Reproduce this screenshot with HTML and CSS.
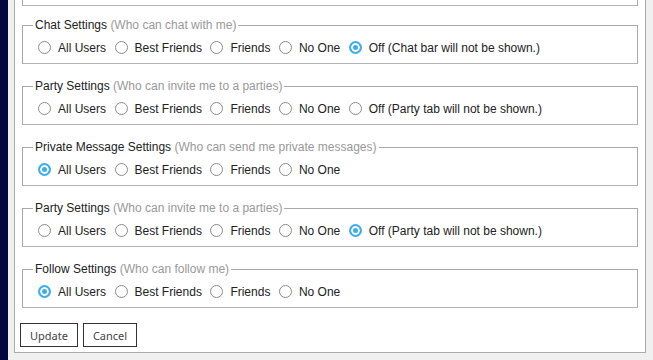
FILE: index.html
```html
<!DOCTYPE html>
<html lang="en">

<head>
    <meta charset="UTF-8">
    <meta name="viewport" content="width=device-width, initial-scale=1.0">
    <title>Privacy Settings</title>

    <link rel="stylesheet" href="styles.css">

</head>

<body>

    <div class="side-bar"></div>

    <div class="main">
        <form class="panel">

            <fieldset class="group">
                <legend>Profile Settings <span class="hint">(Who can see my profile)</span></legend>
                <div class="options">
                    <label class="option"><input type="radio" name="profile" checked><span>All Users</span></label>
                    <label class="option"><input type="radio" name="profile"><span>Best Friends</span></label>
                    <label class="option"><input type="radio" name="profile"><span>Friends</span></label>
                    <label class="option"><input type="radio" name="profile"><span>No One</span></label>
                </div>
            </fieldset>

            <fieldset class="group">
                <legend>Chat Settings <span class="hint">(Who can chat with me)</span></legend>
                <div class="options">
                    <label class="option"><input type="radio" name="chat"><span>All Users</span></label>
                    <label class="option"><input type="radio" name="chat"><span>Best Friends</span></label>
                    <label class="option"><input type="radio" name="chat"><span>Friends</span></label>
                    <label class="option"><input type="radio" name="chat"><span>No One</span></label>
                    <label class="option"><input type="radio" name="chat" checked><span>Off (Chat bar will not be shown.)</span></label>
                </div>
            </fieldset>

            <fieldset class="group">
                <legend>Party Settings <span class="hint">(Who can invite me to a parties)</span></legend>
                <div class="options">
                    <label class="option"><input type="radio" name="party1"><span>All Users</span></label>
                    <label class="option"><input type="radio" name="party1"><span>Best Friends</span></label>
                    <label class="option"><input type="radio" name="party1"><span>Friends</span></label>
                    <label class="option"><input type="radio" name="party1"><span>No One</span></label>
                    <label class="option"><input type="radio" name="party1"><span>Off (Party tab will not be shown.)</span></label>
                </div>
            </fieldset>

            <fieldset class="group">
                <legend>Private Message Settings <span class="hint">(Who can send me private messages)</span></legend>
                <div class="options">
                    <label class="option"><input type="radio" name="pm" checked><span>All Users</span></label>
                    <label class="option"><input type="radio" name="pm"><span>Best Friends</span></label>
                    <label class="option"><input type="radio" name="pm"><span>Friends</span></label>
                    <label class="option"><input type="radio" name="pm"><span>No One</span></label>
                </div>
            </fieldset>

            <fieldset class="group">
                <legend>Party Settings <span class="hint">(Who can invite me to a parties)</span></legend>
                <div class="options">
                    <label class="option"><input type="radio" name="party2"><span>All Users</span></label>
                    <label class="option"><input type="radio" name="party2"><span>Best Friends</span></label>
                    <label class="option"><input type="radio" name="party2"><span>Friends</span></label>
                    <label class="option"><input type="radio" name="party2"><span>No One</span></label>
                    <label class="option"><input type="radio" name="party2" checked><span>Off (Party tab will not be shown.)</span></label>
                </div>
            </fieldset>

            <fieldset class="group">
                <legend>Follow Settings <span class="hint">(Who can follow me)</span></legend>
                <div class="options">
                    <label class="option"><input type="radio" name="follow" checked><span>All Users</span></label>
                    <label class="option"><input type="radio" name="follow"><span>Best Friends</span></label>
                    <label class="option"><input type="radio" name="follow"><span>Friends</span></label>
                    <label class="option"><input type="radio" name="follow"><span>No One</span></label>
                </div>
            </fieldset>

            <div class="actions">
                <button type="button">Update</button>
                <button type="button">Cancel</button>
            </div>

        </form>
    </div>

</body>

</html>
```

FILE: styles.css
```css
body {
    margin: 0;
    height: 100vh;
    overflow: hidden;
    display: flex;
    background-color: #f0f0f0;
    font-family: "Liberation Sans", Arial, sans-serif;
    font-size: 12px;
    color: #222;
}

.side-bar {
    width: 8px;
    flex-shrink: 0;
    background-color: #03063f;
}

.main {
    flex: 1;
    padding: 0 7px 0 6px;
}

.panel {
    margin-top: -41px;
    background-color: #fff;
    border: 1px solid #aaa;
    padding: 0 5px 5px 5px;
}

.group {
    margin: 0 2px 15px 2px;
    padding: 0 10px 7px 10px;
    border: 1px solid #a8a8a8;
    border-bottom-color: #b4b4b4;
}

.group:first-child {
    margin-bottom: 12px;
}

legend {
    padding: 0 2px;
    height: 14px;
    line-height: 14px;
    color: #222;
}

.hint {
    color: #999;
}

.options {
    display: flex;
    align-items: center;
    gap: 8.5px;
    padding: 7px 0 0 5px;
    height: 17px;
}

.option {
    display: flex;
    align-items: center;
    gap: 7px;
}

.option input {
    appearance: none;
    margin: 0;
    width: 13px;
    height: 13px;
    border: 1px solid #8a8a8a;
    border-radius: 50%;
    background-color: #fff;
}

.option input:checked {
    border: 2px solid #3daee9;
    background-color: #3daee9;
    box-shadow: inset 0 0 0 2px #fff;
}

.actions {
    display: flex;
    gap: 5px;
}

button {
    font-family: "Noto Sans", sans-serif;
    font-size: 11px;
    color: #444;
    background-color: #fff;
    border: 1px solid #333;
    height: 24px;
    padding: 0 9px;
}
```
